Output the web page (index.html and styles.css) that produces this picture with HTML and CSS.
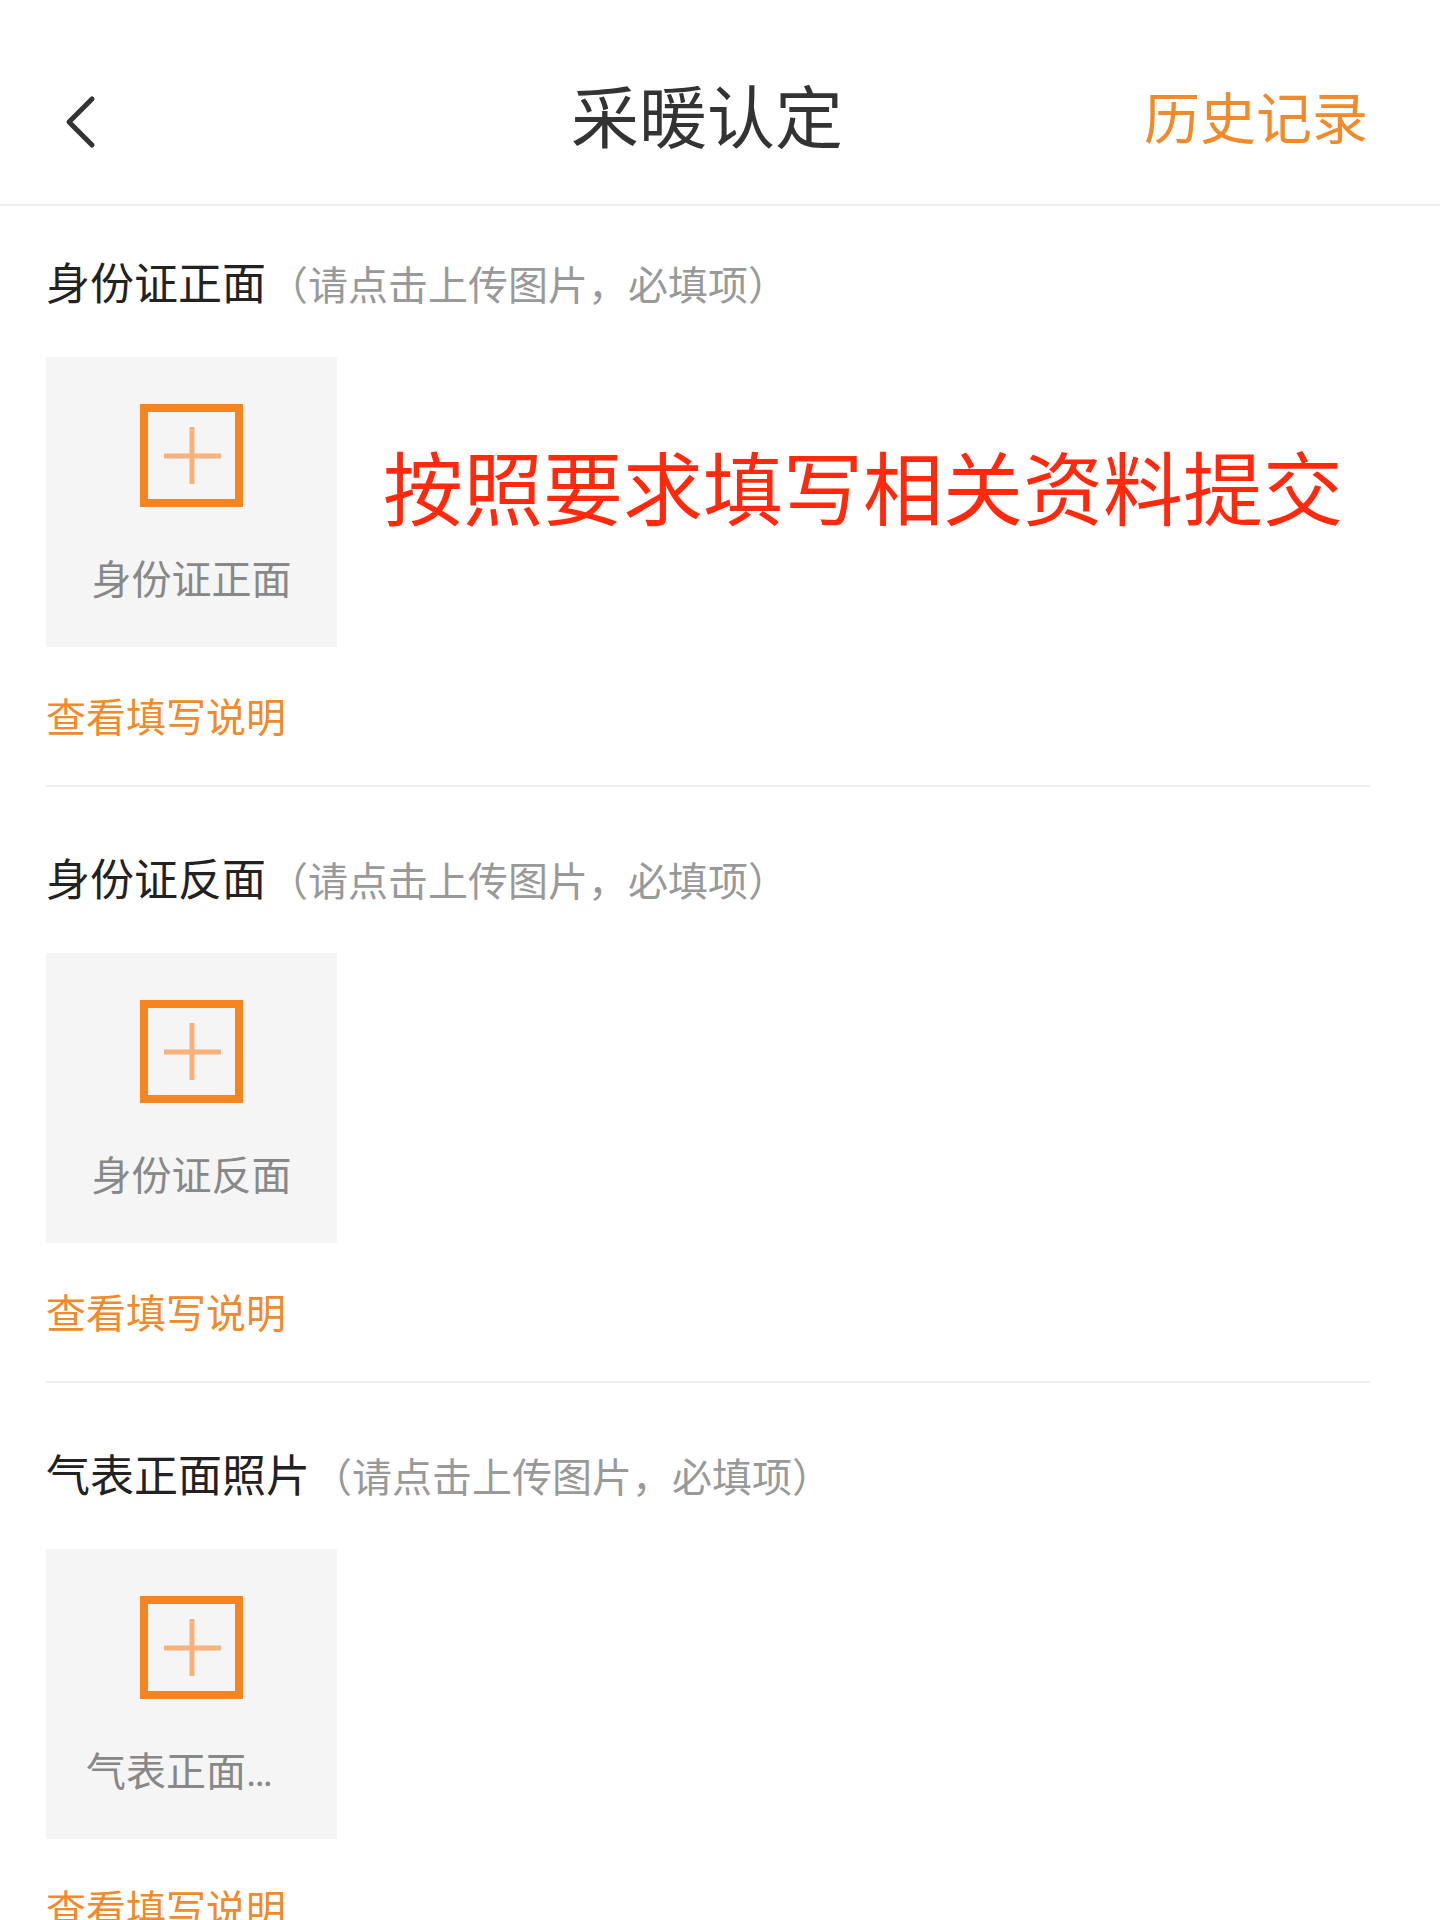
FILE: index.html
```html
<!DOCTYPE html>
<html lang="zh-CN">
<head>
<meta charset="UTF-8" />
<title>采暖认定</title>
<meta name="viewport" content="width=device-width, initial-scale=1.0">
<link rel="stylesheet" href="styles.css">
</head>
<body>

  <header class="topbar">
    <a class="back" href="#" aria-label="返回">
      <svg width="40" height="60" viewBox="0 0 40 60">
        <polyline points="27,6 4,29 27,52" fill="none" stroke="#333" stroke-width="5" stroke-linecap="round" stroke-linejoin="round"/>
      </svg>
    </a>
    <h1>采暖认定</h1>
    <a class="history" href="#">历史记录</a>
  </header>

  <main class="form">
    <section class="field">
      <div class="field-title">身份证正面<span class="hint">（请点击上传图片，必填项）</span></div>
      <div class="upload-row">
        <div class="upload-box">
          <svg class="plus" width="103" height="103" viewBox="0 0 103 103">
            <rect x="4" y="4" width="95" height="95" fill="none" stroke="#f7841f" stroke-width="8"/>
            <line x1="24" y1="52" x2="81" y2="52" stroke="#f6b27a" stroke-width="5"/>
            <line x1="52" y1="23" x2="52" y2="80" stroke="#f6b27a" stroke-width="5"/>
          </svg>
          <div class="upload-label">身份证正面</div>
        </div>
        <div class="notice">按照要求填写相关资料提交</div>
      </div>
      <a class="guide" href="#">查看填写说明</a>
    </section>

    <section class="field">
      <div class="field-title">身份证反面<span class="hint">（请点击上传图片，必填项）</span></div>
      <div class="upload-row">
        <div class="upload-box">
          <svg class="plus" width="103" height="103" viewBox="0 0 103 103">
            <rect x="4" y="4" width="95" height="95" fill="none" stroke="#f7841f" stroke-width="8"/>
            <line x1="24" y1="52" x2="81" y2="52" stroke="#f6b27a" stroke-width="5"/>
            <line x1="52" y1="23" x2="52" y2="80" stroke="#f6b27a" stroke-width="5"/>
          </svg>
          <div class="upload-label">身份证反面</div>
        </div>
      </div>
      <a class="guide" href="#">查看填写说明</a>
    </section>

    <section class="field">
      <div class="field-title">气表正面照片<span class="hint">（请点击上传图片，必填项）</span></div>
      <div class="upload-row">
        <div class="upload-box">
          <svg class="plus" width="103" height="103" viewBox="0 0 103 103">
            <rect x="4" y="4" width="95" height="95" fill="none" stroke="#f7841f" stroke-width="8"/>
            <line x1="24" y1="52" x2="81" y2="52" stroke="#f6b27a" stroke-width="5"/>
            <line x1="52" y1="23" x2="52" y2="80" stroke="#f6b27a" stroke-width="5"/>
          </svg>
          <div class="upload-label">气表正面照片</div>
        </div>
      </div>
      <a class="guide" href="#">查看填写说明</a>
    </section>
  </main>

</body>
</html>
```

FILE: styles.css
```css
body {
  font-family: Roboto, "Noto Sans CJK SC", sans-serif;
  margin: 0;
  padding: 0;
  background-color: #ffffff;
  color: #222;
}
a {
  text-decoration: none;
}
.topbar {
  height: 168px;
  padding: 36px 72px 0 46px;
  display: grid;
  grid-template-columns: 1fr auto 1fr;
  align-items: center;
  border-bottom: 2px solid #eeeeee;
}
.topbar .back {
  justify-self: start;
  display: block;
  padding-left: 19px;
  padding-top: 6px;
}
.topbar .back svg {
  display: block;
}
.topbar h1 {
  margin: 0;
  font-size: 68px;
  font-weight: 400;
  line-height: 80px;
  color: #333;
  white-space: nowrap;
}
.topbar .history {
  justify-self: end;
  font-size: 56px;
  line-height: 70px;
  color: #f08a2a;
  white-space: nowrap;
}
.form {
  padding: 0 70px 0 46px;
}
.field {
  padding: 64px 0 38px;
  border-bottom: 2px solid #eeeeee;
}
.field:first-child {
  padding-top: 49px;
}
.field-title {
  font-size: 44px;
  line-height: 60px;
  color: #222;
  white-space: nowrap;
}
.field-title .hint {
  font-size: 40px;
  color: #999;
  margin-left: 2px;
}
.upload-row {
  display: flex;
  align-items: flex-start;
  margin-top: 40px;
}
.upload-box {
  width: 291px;
  height: 290px;
  box-sizing: border-box;
  padding: 47px 40px 0;
  background-color: #f5f5f5;
  display: flex;
  flex-direction: column;
  align-items: center;
  flex-shrink: 0;
}
.upload-box .plus {
  display: block;
}
.upload-label {
  width: 100%;
  margin-top: 49px;
  font-size: 40px;
  line-height: 50px;
  color: #888;
  text-align: center;
  white-space: nowrap;
  overflow: hidden;
  text-overflow: ellipsis;
}
.notice {
  margin: 95px 0 0 46px;
  font-size: 80px;
  line-height: 80px;
  color: #ff2a0e;
  white-space: nowrap;
}
.guide {
  display: block;
  margin-top: 44px;
  font-size: 40px;
  line-height: 56px;
  color: #f08a2a;
}
```
